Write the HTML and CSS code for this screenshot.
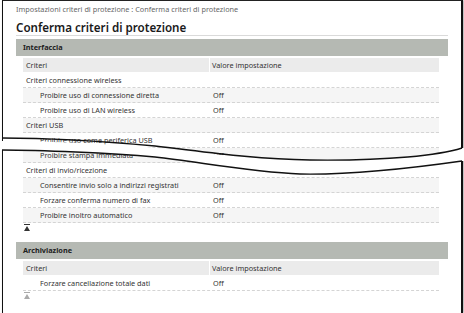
FILE: index.html
```html
<!DOCTYPE html>
<html lang="it">
<head>
  <meta charset="UTF-8">
  <title>Conferma criteri di protezione</title>
  <link rel="stylesheet" href="styles.css">
</head>
<body>
  <div class="sheet">
    <p class="crumb">Impostazioni criteri di protezione : Conferma criteri di protezione</p>
    <h1 class="title">Conferma criteri di protezione</h1>

    <!-- Interfaccia -->
    <section class="block">
      <h2 class="block-head">Interfaccia</h2>
      <div class="block-body">
        <div class="grid-head"><span>Criteri</span><span class="val">Valore impostazione</span></div>
        <div class="row group"><span>Criteri connessione wireless</span><span></span></div>
        <div class="row item alt"><span>Proibire uso di connessione diretta</span><span class="val">Off</span></div>
        <div class="row item"><span>Proibire uso di LAN wireless</span><span class="val">Off</span></div>
        <div class="row group alt"><span>Criteri USB</span><span></span></div>
        <div class="row item"><span>Proibire uso come periferica USB</span><span class="val">Off</span></div>
        <div class="row item alt"><span>Proibire stampa immediata</span><span class="val">Off</span></div>
        <div class="row group"><span>Criteri di invio/ricezione</span><span></span></div>
        <div class="row item alt"><span>Consentire invio solo a indirizzi registrati</span><span class="val">Off</span></div>
        <div class="row item"><span>Forzare conferma numero di fax</span><span class="val">Off</span></div>
        <div class="row item alt"><span>Proibire inoltro automatico</span><span class="val">Off</span></div>
        <div class="to-top">
          <svg width="6" height="7" viewBox="0 0 6 7"><rect x="0" y="0" width="6" height="1" fill="currentColor"/><polygon points="3,2 6,7 0,7" fill="currentColor"/></svg>
        </div>
      </div>
    </section>

    <!-- Archiviazione -->
    <section class="block second">
      <h2 class="block-head">Archiviazione</h2>
      <div class="block-body">
        <div class="grid-head"><span>Criteri</span><span class="val">Valore impostazione</span></div>
        <div class="row item"><span>Forzare cancellazione totale dati</span><span class="val">Off</span></div>
        <div class="to-top muted">
          <svg width="6" height="7" viewBox="0 0 6 7"><rect x="0" y="0" width="6" height="1" fill="currentColor"/><polygon points="3,2 6,7 0,7" fill="currentColor"/></svg>
        </div>
      </div>
    </section>
  </div>

  <!-- strappo della pagina -->
  <svg class="tear" width="464" height="313" viewBox="0 0 464 313">
    <path fill="#fff" d="M0 141 L2 141 C40 141, 100 143, 155 148 C200 152, 250 160, 310 160 C390 160, 440 155, 462 148 L464 148 L464 161 L462 161 C420 167, 350 175, 300 174 C250 172, 200 162, 155 157 C110 153, 40 150, 2 150 L0 150 Z"/>
    <path fill="none" stroke="#111" stroke-width="1.4" d="M2 138 C40 138, 100 141, 155 146 C200 151, 250 159, 310 160 C390 161, 440 155, 462 148"/>
    <path fill="none" stroke="#111" stroke-width="1.4" d="M2 150 C40 150, 110 153, 155 157 C200 162, 250 172, 300 174 C350 175, 420 167, 462 161"/>
  </svg>
</body>
</html>
```

FILE: styles.css
```css
/* Colori */
:root {
  --text: #333333;
  --muted: #666666;
  --head-bg: #b5b9b3;
  --grid-bg: #ebebeb;
  --alt-bg: #f5f5f5;
  --dash: #d4d4d4;
}

* { margin: 0; padding: 0; box-sizing: border-box; }
body {
  font-family: 'Noto Sans', 'Liberation Sans', sans-serif;
  font-size: 7.3px;
  color: var(--text);
  background: #fff;
  position: relative;
  overflow: hidden;
}

/* Foglio */
.sheet {
  margin-left: 2px;
  width: 461px;
  min-height: 313px;
  border-top: 1px solid #222;
  border-left: 1px solid #111;
  border-right: 2px solid #111;
  box-shadow: 1px 0 2px rgba(0,0,0,0.35);
  padding: 0 13px;
}

.crumb { color: var(--muted); line-height: 10px; padding-top: 3px; }
.title {
  font-size: 11.6px;
  font-weight: 600;
  color: #1a1a1a;
  line-height: 14px;
  margin-top: 7px;
  border-bottom: 1px solid #dadada;
}

/* Blocchi */
.block { margin-top: 3px; }
.block.second { margin-top: 11px; }
.block-head {
  background: var(--head-bg);
  font-size: 7.3px;
  font-weight: 700;
  color: #222;
  line-height: 17px;
  padding-left: 7px;
}
.block-body { padding: 2px 9px 0 7px; }

.grid-head, .row {
  display: grid;
  grid-template-columns: 186px 1fr;
}
.grid-head {
  background: var(--grid-bg);
  line-height: 14px;
  margin-bottom: 1px;
}
.grid-head span:first-child { padding-left: 3px; }
.grid-head .val { border-left: 1px solid #fff; padding-left: 2px; }

.row {
  line-height: 14px;
  border-bottom: 1px dashed var(--dash);
}
.row.alt { background: var(--alt-bg); }
.row.group span:first-child { padding-left: 3px; }
.row.item span:first-child { padding-left: 17px; }
.row .val { padding-left: 4px; }

.to-top { height: 7px; margin-top: 1px; padding-left: 1px; color: #333; line-height: 0; }
.to-top.muted { color: #aaa; }

/* Strappo */
.tear { position: absolute; top: 0; left: 0; pointer-events: none; }
```
